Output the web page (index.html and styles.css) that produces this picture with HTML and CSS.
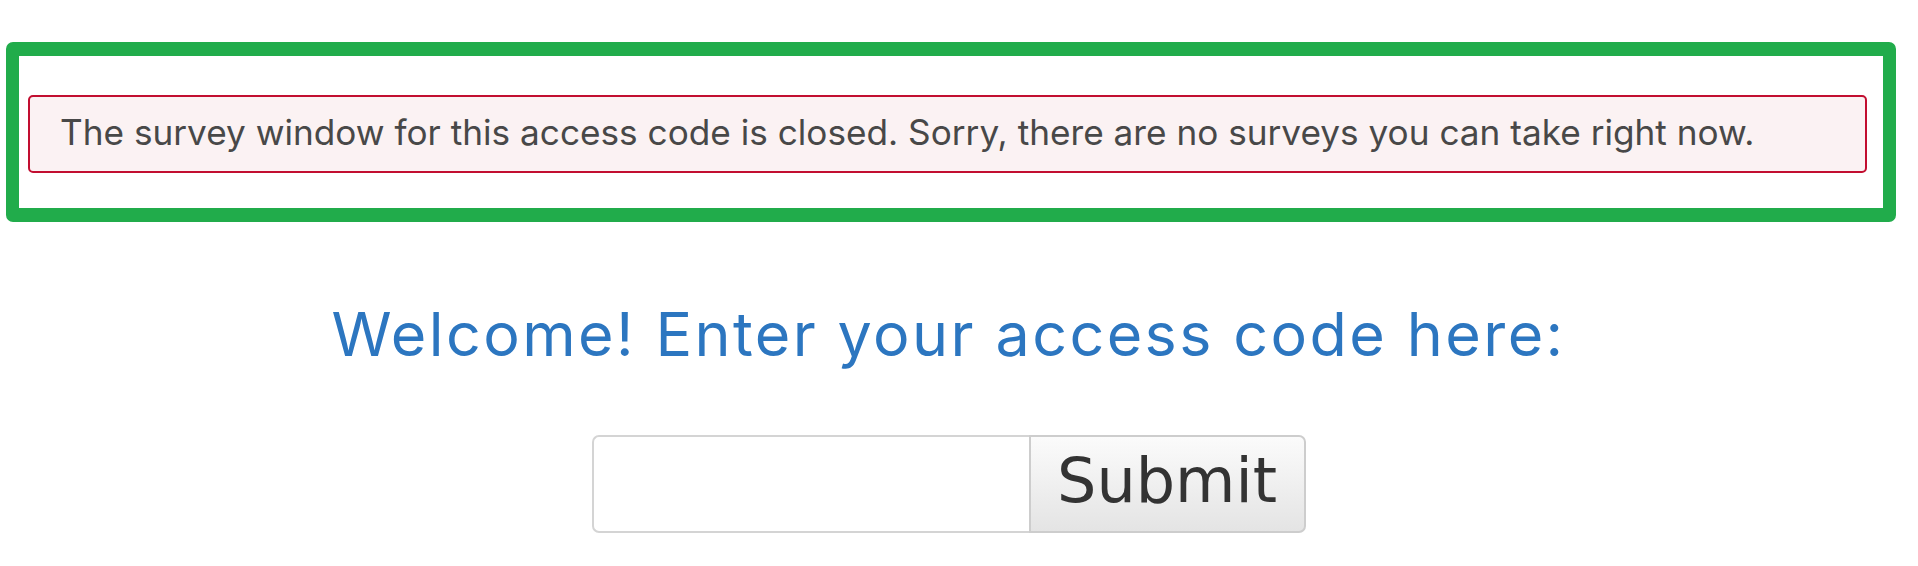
FILE: index.html
```html
<!DOCTYPE html>
<html lang="en">
<head>
<meta charset="utf-8">
<title>Survey access</title>
<link rel="stylesheet" href="styles.css">
</head>
<body>
<div class="page">
  <div class="highlight">
    <div class="alert">The survey window for this access code is closed. Sorry, there are no surveys you can take right now.</div>
  </div>
  <h1 class="welcome">Welcome! Enter your access code here:</h1>
  <form class="access-form">
    <input class="code-input" type="text" aria-label="Access code">
    <button class="submit-btn" type="button">Submit</button>
  </form>
</div>
</body>
</html>
```
FILE: styles.css
```css
html, body {
  margin: 0;
  padding: 0;
  background: #ffffff;
}

.page {
  width: 1897px;
  padding-top: 42px;
  box-sizing: border-box;
}

.highlight {
  margin-left: 6px;
  width: 1890px;
  box-sizing: border-box;
  border-style: solid;
  border-color: #21ac4b;
  border-width: 14px 13px;
  border-radius: 7px;
  padding: 39px 16px 35px 9px;
}

.alert {
  background: #fbf2f3;
  border: 2px solid #c20e30;
  border-radius: 5px;
  color: #484848;
  font-family: "Inter", "Open Sans", sans-serif;
  font-size: 35.2px;
  line-height: 44px;
  padding: 13px 30px 17px 30px;
  white-space: nowrap;
}

.welcome {
  margin: 76px 0 0 0;
  text-align: center;
  color: #2c76c0;
  font-family: "Inter", "Open Sans", sans-serif;
  font-weight: 400;
  font-size: 61px;
  line-height: 72px;
  letter-spacing: 2.4px;
}

.access-form {
  display: flex;
  justify-content: center;
  margin: 65px 0 0 0;
}

.code-input {
  width: 437px;
  height: 98px;
  box-sizing: border-box;
  border: 2px solid #d4d4d4;
  border-right: none;
  border-radius: 7px 0 0 7px;
  background: #ffffff;
  margin: 0;
  padding: 0 16px;
  font-size: 40px;
  outline: none;
}

.submit-btn {
  width: 277px;
  height: 98px;
  box-sizing: border-box;
  margin: 0;
  border: 2px solid #cdcdcd;
  border-radius: 0 7px 7px 0;
  background: linear-gradient(#fbfbfb, #e4e4e4);
  color: #333333;
  font-family: "DejaVu Sans", sans-serif;
  font-size: 62px;
  line-height: 1;
  padding: 0 0 6px 0;
  display: flex;
  align-items: center;
  justify-content: center;
}
```
